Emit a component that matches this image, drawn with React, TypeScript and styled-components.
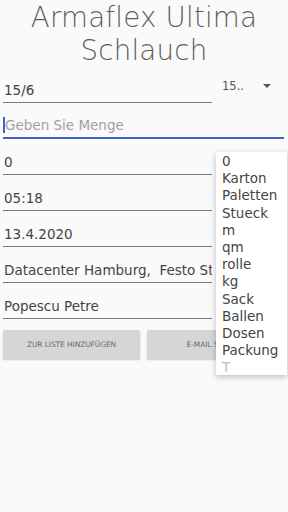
import styled, { createGlobalStyle } from "styled-components";

const GlobalStyle = createGlobalStyle`
  html, body {
    margin: 0;
    padding: 0;
    background: #fafafa;
  }
  body {
    font-family: "DejaVu Sans", "Open Sans", sans-serif;
    color: #3a3a3a;
  }
`;

const PageStyled = styled.div`
  position: relative;
  width: 288px;
  height: 512px;
  overflow: hidden;
  background: #fafafa;
  padding: 0 3px;
  box-sizing: border-box;
`;

const TitleStyled = styled.h1`
  margin: 0;
  padding-top: 1px;
  font-size: 27.7px;
  font-weight: 300;
  line-height: 33px;
  text-align: center;
  color: #5e5e5e;
  letter-spacing: 0.2px;
`;

const RowStyled = styled.div`
  display: flex;
  align-items: flex-end;
`;

const FieldStyled = styled.div<{ $wide?: boolean; $focused?: boolean }>`
  display: flex;
  align-items: flex-end;
  box-sizing: border-box;
  width: ${(p) => (p.$wide ? "281px" : "209px")};
  height: 36px;
  padding: 0 0 4px 1px;
  border-bottom: ${(p) => (p.$focused ? "2px solid #3f62c9" : "1px solid #7a7a7a")};
  font-size: 13.5px;
  color: #444;
  white-space: nowrap;
  overflow: hidden;
`;

const PlaceholderStyled = styled.span`
  color: #a0a0a0;
  border-left: 2px solid #3f62c9;
  margin-left: -1px;
`;

const SelectStyled = styled.div`
  display: flex;
  align-items: center;
  justify-content: space-between;
  flex: 1;
  height: 20px;
  margin: 0 14px 7px 10px;
  font-size: 11.5px;
  color: #555;
`;

const ArrowStyled = styled.span`
  width: 0;
  height: 0;
  border-left: 4px solid transparent;
  border-right: 4px solid transparent;
  border-top: 4px solid #555;
`;

const ButtonRowStyled = styled.div`
  display: flex;
  gap: 7px;
  margin-top: 11px;
`;

const ButtonStyled = styled.div`
  width: 137px;
  height: 29px;
  display: flex;
  align-items: center;
  justify-content: center;
  background: #d6d6d6;
  box-shadow: 0 1px 2px rgba(0, 0, 0, 0.2);
  border-radius: 2px;
  font-size: 7.5px;
  color: #6a6a6a;
  letter-spacing: -0.1px;
  text-transform: uppercase;
`;

const MenuStyled = styled.div`
  position: absolute;
  left: 216px;
  top: 152px;
  width: 71px;
  height: 223px;
  box-sizing: border-box;
  padding: 1px 0 0 6px;
  background: #ffffff;
  box-shadow: 0 2px 6px rgba(0, 0, 0, 0.25);
`;

const MenuItemStyled = styled.div<{ $muted?: boolean }>`
  height: 17.2px;
  line-height: 17.2px;
  font-size: 13.5px;
  white-space: nowrap;
  color: ${(p) => (p.$muted ? "#bdbdbd" : "#444")};
`;

const units = [
  "0",
  "Karton",
  "Paletten",
  "Stueck",
  "m",
  "qm",
  "rolle",
  "kg",
  "Sack",
  "Ballen",
  "Dosen",
  "Packung",
];

export default function App() {
  return (
    <>
      <GlobalStyle />
      <PageStyled>
        <TitleStyled>
          Armaflex Ultima
          <br />
          Schlauch
        </TitleStyled>
        <RowStyled>
          <FieldStyled>15/6</FieldStyled>
          <SelectStyled>
            <span>15..</span>
            <ArrowStyled />
          </SelectStyled>
        </RowStyled>
        <FieldStyled $wide $focused>
          <PlaceholderStyled>Geben Sie Menge</PlaceholderStyled>
        </FieldStyled>
        <FieldStyled>0</FieldStyled>
        <FieldStyled>05:18</FieldStyled>
        <FieldStyled>13.4.2020</FieldStyled>
        <FieldStyled>Datacenter Hamburg,&nbsp; Festo Standort</FieldStyled>
        <FieldStyled>Popescu Petre</FieldStyled>
        <ButtonRowStyled>
          <ButtonStyled>Zur Liste hinzufügen</ButtonStyled>
          <ButtonStyled>E-Mail senden</ButtonStyled>
        </ButtonRowStyled>
        <MenuStyled>
          {units.map((u) => (
            <MenuItemStyled key={u}>{u}</MenuItemStyled>
          ))}
          <MenuItemStyled $muted>T</MenuItemStyled>
        </MenuStyled>
      </PageStyled>
    </>
  );
}
